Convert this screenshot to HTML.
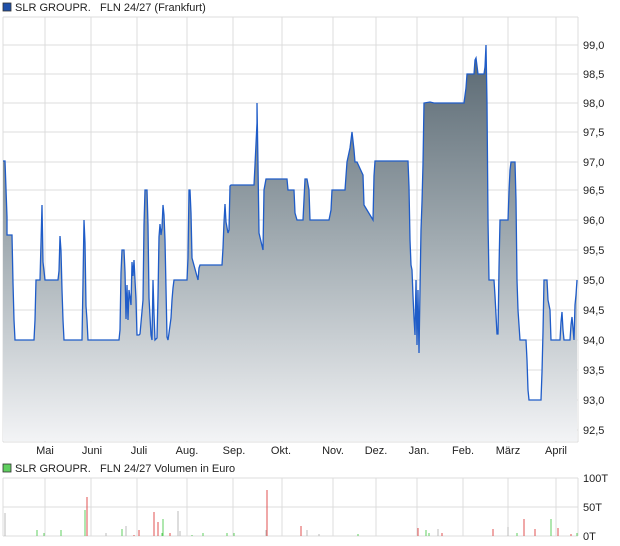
<!DOCTYPE html>
<html><head><meta charset="utf-8"><style>
html,body{margin:0;padding:0;background:#fff;width:620px;height:546px;overflow:hidden;font-family:"Liberation Sans",sans-serif;}
svg text{font-family:"Liberation Sans",sans-serif;font-size:11px;fill:#222;}
</style></head><body>
<svg width="620" height="546" viewBox="0 0 620 546" xmlns="http://www.w3.org/2000/svg">
<defs>
<linearGradient id="g" x1="0" y1="45" x2="0" y2="442" gradientUnits="userSpaceOnUse">
<stop offset="0" stop-color="#56656f"/>
<stop offset="0.5" stop-color="#a2acb2"/>
<stop offset="1" stop-color="#f3f4f6"/>
</linearGradient>
</defs>
<rect x="3" y="3" width="8" height="8" fill="#1f4fa8" stroke="#333" stroke-width="0.8"/>
<text x="15" y="11">SLR GROUPR.</text><text x="100" y="11">FLN 24/27 (Frankfurt)</text>
<g stroke="#dcdcdc" stroke-width="1">
<line x1="3" y1="17" x2="578" y2="17"/>
<line x1="3" y1="45" x2="578" y2="45"/><line x1="3" y1="74" x2="578" y2="74"/><line x1="3" y1="103" x2="578" y2="103"/><line x1="3" y1="132" x2="578" y2="132"/><line x1="3" y1="162" x2="578" y2="162"/><line x1="3" y1="190" x2="578" y2="190"/><line x1="3" y1="220" x2="578" y2="220"/><line x1="3" y1="250" x2="578" y2="250"/><line x1="3" y1="280" x2="578" y2="280"/><line x1="3" y1="310" x2="578" y2="310"/><line x1="3" y1="340" x2="578" y2="340"/><line x1="3" y1="370" x2="578" y2="370"/><line x1="3" y1="400" x2="578" y2="400"/><line x1="3" y1="430" x2="578" y2="430"/>
<line x1="3" y1="442" x2="578" y2="442"/>
<line x1="3" y1="17" x2="3" y2="442"/><line x1="578" y1="17" x2="578" y2="442"/>
<line x1="45" y1="17" x2="45" y2="442"/><line x1="91" y1="17" x2="91" y2="442"/><line x1="137" y1="17" x2="137" y2="442"/><line x1="187" y1="17" x2="187" y2="442"/><line x1="233" y1="17" x2="233" y2="442"/><line x1="282" y1="17" x2="282" y2="442"/><line x1="333" y1="17" x2="333" y2="442"/><line x1="376" y1="17" x2="376" y2="442"/><line x1="417" y1="17" x2="417" y2="442"/><line x1="463" y1="17" x2="463" y2="442"/><line x1="508" y1="17" x2="508" y2="442"/><line x1="556" y1="17" x2="556" y2="442"/>
</g>
<path d="M3,161 L5,161 7,217 7,235 12,235 13,283 14,320 15,340 34,340 35,320 36,280 40,280 41,243 42,205 43,262 45,280 58,280 59,271 60,236 61,251 62,290 63,320 64,340 82,340 83,282 84,220 85,243 86,306 87,320 88,340 119,340 120,330 121,273 122,250 124,250 125,272 126,319 127,285 128,320 129,290 131,305 132,262 133,276 134,260 136,300 137,335 139,335 140,334 143,300 144,225 145,190 147,190 148,225 149,298 151,335 152,340 153,280 154,314 155,340 157,338 158,296 159,237 160,224 161,235 162,228 163,205 164,215 165,240 167,337 168,340 169,333 171,318 172,300 173,288 174,280 187,280 188,258 189,190 190,190 191,213 192,258 198,280 199,268 200,265 222,265 223,248 224,222 225,204 226,222 228,233 229,230 230,186 231,185 254,185 255,165 257,123 257,103 258,165 259,233 263,250 264,190 266,179 287,179 288,190 294,190 295,213 297,220 303,220 305,179 307,179 309,190 310,220 329,220 331,210 332,190 345,190 347,162 350,148 352,132 354,150 355,162 357,162 363,175 364,205 373,220 374,176 375,161 408,161 409,187 410,240 411,265 412,270 413,296 414,318 415,335 416,280 417,345 418,290 419,353 420,290 421,230 422,202 423,164 424,103 430,102 434,103 464,103 466,88 467,74 474,74 475,60 476,58 477,66 478,74 484,74 485,67 486,45 487,103 488,220 489,280 494,280 495,296 496,315 497,334 498,334 499,268 500,220 508,220 509,192 510,170 511,162 515,162 516,200 517,280 518,310 520,340 526,340 527,360 528,390 529,400 541,400 542,372 543,332 544,280 547,280 548,300 550,310 551,340 560,340 561,322 562,312 563,330 564,340 570,340 571,325 572,317 573,328 574,340 575,305 576,295 577,280 L577,441 L3,441 Z" fill="url(#g)" stroke="none"/>
<path d="M3,161 L5,161 7,217 7,235 12,235 13,283 14,320 15,340 34,340 35,320 36,280 40,280 41,243 42,205 43,262 45,280 58,280 59,271 60,236 61,251 62,290 63,320 64,340 82,340 83,282 84,220 85,243 86,306 87,320 88,340 119,340 120,330 121,273 122,250 124,250 125,272 126,319 127,285 128,320 129,290 131,305 132,262 133,276 134,260 136,300 137,335 139,335 140,334 143,300 144,225 145,190 147,190 148,225 149,298 151,335 152,340 153,280 154,314 155,340 157,338 158,296 159,237 160,224 161,235 162,228 163,205 164,215 165,240 167,337 168,340 169,333 171,318 172,300 173,288 174,280 187,280 188,258 189,190 190,190 191,213 192,258 198,280 199,268 200,265 222,265 223,248 224,222 225,204 226,222 228,233 229,230 230,186 231,185 254,185 255,165 257,123 257,103 258,165 259,233 263,250 264,190 266,179 287,179 288,190 294,190 295,213 297,220 303,220 305,179 307,179 309,190 310,220 329,220 331,210 332,190 345,190 347,162 350,148 352,132 354,150 355,162 357,162 363,175 364,205 373,220 374,176 375,161 408,161 409,187 410,240 411,265 412,270 413,296 414,318 415,335 416,280 417,345 418,290 419,353 420,290 421,230 422,202 423,164 424,103 430,102 434,103 464,103 466,88 467,74 474,74 475,60 476,58 477,66 478,74 484,74 485,67 486,45 487,103 488,220 489,280 494,280 495,296 496,315 497,334 498,334 499,268 500,220 508,220 509,192 510,170 511,162 515,162 516,200 517,280 518,310 520,340 526,340 527,360 528,390 529,400 541,400 542,372 543,332 544,280 547,280 548,300 550,310 551,340 560,340 561,322 562,312 563,330 564,340 570,340 571,325 572,317 573,328 574,340 575,305 576,295 577,280" fill="none" stroke="#1f5cc8" stroke-width="1.3"/>
<text x="583" y="49">99,0</text><text x="583" y="78">98,5</text><text x="583" y="107">98,0</text><text x="583" y="136">97,5</text><text x="583" y="166">97,0</text><text x="583" y="194">96,5</text><text x="583" y="224">96,0</text><text x="583" y="254">95,5</text><text x="583" y="284">95,0</text><text x="583" y="314">94,5</text><text x="583" y="344">94,0</text><text x="583" y="374">93,5</text><text x="583" y="404">93,0</text><text x="583" y="434">92,5</text>
<g text-anchor="middle">
<text x="45" y="454">Mai</text><text x="92" y="454">Juni</text><text x="139" y="454">Juli</text><text x="187" y="454">Aug.</text><text x="234" y="454">Sep.</text><text x="281" y="454">Okt.</text><text x="333" y="454">Nov.</text><text x="376" y="454">Dez.</text><text x="419" y="454">Jan.</text><text x="463" y="454">Feb.</text><text x="508" y="454">März</text><text x="556" y="454">April</text>
</g>
<rect x="3" y="464" width="8" height="8" fill="#5fcf5f" stroke="#333" stroke-width="0.8"/>
<text x="15" y="472">SLR GROUPR.</text><text x="100" y="472">FLN 24/27 Volumen in Euro</text>
<g stroke="#dcdcdc" stroke-width="1">
<line x1="3" y1="478" x2="578" y2="478"/><line x1="3" y1="507" x2="578" y2="507"/><line x1="3" y1="536" x2="578" y2="536"/>
<line x1="3" y1="478" x2="3" y2="536"/><line x1="578" y1="478" x2="578" y2="536"/>
<line x1="45" y1="478" x2="45" y2="536"/><line x1="91" y1="478" x2="91" y2="536"/><line x1="137" y1="478" x2="137" y2="536"/><line x1="187" y1="478" x2="187" y2="536"/><line x1="233" y1="478" x2="233" y2="536"/><line x1="282" y1="478" x2="282" y2="536"/><line x1="333" y1="478" x2="333" y2="536"/><line x1="376" y1="478" x2="376" y2="536"/><line x1="417" y1="478" x2="417" y2="536"/><line x1="463" y1="478" x2="463" y2="536"/><line x1="508" y1="478" x2="508" y2="536"/><line x1="556" y1="478" x2="556" y2="536"/>
</g>
<g stroke-width="1">
<line x1="5" y1="536" x2="5" y2="513" stroke="#bbb"/>
<line x1="37" y1="536" x2="37" y2="530" stroke="#5fcf5f"/>
<line x1="44" y1="536" x2="44" y2="533" stroke="#5fcf5f"/>
<line x1="61" y1="536" x2="61" y2="530" stroke="#5fcf5f"/>
<line x1="85" y1="536" x2="85" y2="510" stroke="#5fcf5f"/>
<line x1="87" y1="536" x2="87" y2="497" stroke="#e05050"/>
<line x1="106" y1="536" x2="106" y2="533" stroke="#bbb"/>
<line x1="122" y1="536" x2="122" y2="529" stroke="#5fcf5f"/>
<line x1="126" y1="536" x2="126" y2="526" stroke="#bbb"/>
<line x1="134" y1="536" x2="134" y2="535" stroke="#e05050"/>
<line x1="139" y1="536" x2="139" y2="530" stroke="#e05050"/>
<line x1="154" y1="536" x2="154" y2="512" stroke="#e05050"/>
<line x1="158" y1="536" x2="158" y2="522" stroke="#e05050"/>
<line x1="162" y1="536" x2="162" y2="533" stroke="#5fcf5f"/>
<line x1="163" y1="536" x2="163" y2="519" stroke="#5fcf5f"/>
<line x1="170" y1="536" x2="170" y2="533" stroke="#e05050"/>
<line x1="178" y1="536" x2="178" y2="511" stroke="#bbb"/>
<line x1="180" y1="536" x2="180" y2="531" stroke="#bbb"/>
<line x1="192" y1="536" x2="192" y2="535" stroke="#5fcf5f"/>
<line x1="203" y1="536" x2="203" y2="533" stroke="#5fcf5f"/>
<line x1="227" y1="536" x2="227" y2="533" stroke="#5fcf5f"/>
<line x1="234" y1="536" x2="234" y2="533" stroke="#5fcf5f"/>
<line x1="266" y1="536" x2="266" y2="530" stroke="#bbb"/>
<line x1="267" y1="536" x2="267" y2="490" stroke="#e05050"/>
<line x1="301" y1="536" x2="301" y2="526" stroke="#e05050"/>
<line x1="307" y1="536" x2="307" y2="530" stroke="#bbb"/>
<line x1="319" y1="536" x2="319" y2="534" stroke="#bbb"/>
<line x1="358" y1="536" x2="358" y2="534" stroke="#5fcf5f"/>
<line x1="418" y1="536" x2="418" y2="528" stroke="#e05050"/>
<line x1="426" y1="536" x2="426" y2="530" stroke="#5fcf5f"/>
<line x1="429" y1="536" x2="429" y2="533" stroke="#5fcf5f"/>
<line x1="438" y1="536" x2="438" y2="529" stroke="#bbb"/>
<line x1="442" y1="536" x2="442" y2="533" stroke="#e05050"/>
<line x1="493" y1="536" x2="493" y2="529" stroke="#e05050"/>
<line x1="508" y1="536" x2="508" y2="527" stroke="#bbb"/>
<line x1="517" y1="536" x2="517" y2="533" stroke="#5fcf5f"/>
<line x1="524" y1="536" x2="524" y2="519" stroke="#e05050"/>
<line x1="535" y1="536" x2="535" y2="529" stroke="#e05050"/>
<line x1="551" y1="536" x2="551" y2="519" stroke="#5fcf5f"/>
<line x1="558" y1="536" x2="558" y2="528" stroke="#e05050"/>
<line x1="571" y1="536" x2="571" y2="534" stroke="#e05050"/>
<line x1="577" y1="536" x2="577" y2="533" stroke="#5fcf5f"/>
</g>
<text x="583" y="482">100T</text><text x="583" y="511">50T</text><text x="583" y="540">0T</text>
</svg>
</body></html>
